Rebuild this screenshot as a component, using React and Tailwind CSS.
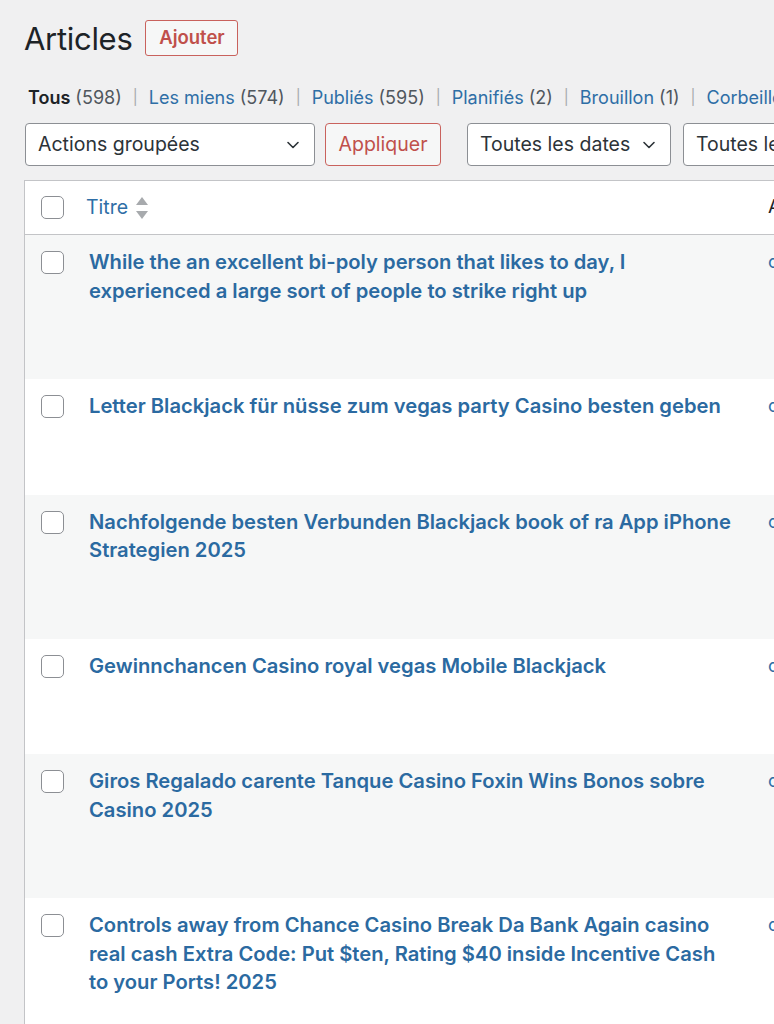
import React from 'react';

const posts = [
    { id: 1, lines: ['While the an excellent bi-poly person that likes to day, I', 'experienced a large sort of people to strike right up'] },
    { id: 2, lines: ['Letter Blackjack für nüsse zum vegas party Casino besten geben'] },
    { id: 3, lines: ['Nachfolgende besten Verbunden Blackjack book of ra App iPhone', 'Strategien 2025'] },
    { id: 4, lines: ['Gewinnchancen Casino royal vegas Mobile Blackjack'] },
    { id: 5, lines: ['Giros Regalado carente Tanque Casino Foxin Wins Bonos sobre', 'Casino 2025'] },
    { id: 6, lines: ['Controls away from Chance Casino Break Da Bank Again casino', 'real cash Extra Code: Put $ten, Rating $40 inside Incentive Cash', 'to your Ports! 2025'] },
];

const filters = [
    { label: 'Tous', count: 598, current: true },
    { label: 'Les miens', count: 574 },
    { label: 'Publiés', count: 595 },
    { label: 'Planifiés', count: 2 },
    { label: 'Brouillon', count: 1 },
    { label: 'Corbeille', count: 21 },
];

function Checkbox() {
    return <span className="block w-[23px] h-[23px] rounded-[5px] border-[1.5px] border-[#8c8f94] bg-white" />;
}

function Chevron() {
    return (
        <svg width="16" height="16" viewBox="0 0 16 16" fill="none" className="shrink-0">
            <path d="M3 5.5l5 5 5-5" stroke="#2c3338" strokeWidth="1.6" strokeLinecap="round" strokeLinejoin="round" />
        </svg>
    );
}

function Select({ label, width, chevron = true }) {
    return (
        <div className={`flex items-center justify-between h-[43px] ${width} shrink-0 rounded-[4px] border border-[#8c8f94] bg-white pl-[12px] pr-[13px] text-[19.5px] text-[#2c3338]`}>
            <span className="whitespace-nowrap">{label}</span>
            {chevron && <Chevron />}
        </div>
    );
}

export default function App() {
    return (
        <div className="min-h-screen w-[774px] overflow-hidden bg-[#f0f0f1] font-['Inter','Noto_Sans',sans-serif] text-[#3c434a]">
            <div className="pl-6 pt-5 w-[1200px]">
                {/* En-tête */}
                <div className="flex items-center gap-[13px] h-9">
                    <h1 className="text-[31px] leading-none text-[#1d2327] tracking-[-0.3px]">Articles</h1>
                    <button className="h-9 w-[93px] rounded-[3px] border border-[#c9625d] bg-[#f6f7f7] text-[18.5px] font-semibold text-[#c0504b]">
                        Ajouter
                    </button>
                </div>

                {/* Filtres de statut */}
                <ul className="flex items-center mt-[29px] ml-1 h-6 text-[18px] whitespace-nowrap">
                    {filters.map((f, i) => (
                        <li key={f.label} className="flex items-center">
                            {i > 0 && <span className="mx-[11px] text-[15px] text-[#a7aaad]">|</span>}
                            <span className={f.current ? 'font-semibold text-[#1d2327]' : 'text-[#2e6ea6]'}>{f.label}</span>
                            <span className="ml-[5px] text-[#50575e]">({f.count})</span>
                        </li>
                    ))}
                </ul>

                {/* Actions groupées */}
                <div className="flex items-center mt-[14px] ml-px">
                    <Select label="Actions groupées" width="w-[290px]" />
                    <button className="ml-[10px] h-[43px] w-[116px] shrink-0 rounded-[4px] border border-[#c9625d] bg-[#f6f7f7] text-[19.5px] text-[#c0504b]">
                        Appliquer
                    </button>
                    <div className="ml-[26px]">
                        <Select label="Toutes les dates" width="w-[204px]" />
                    </div>
                    <div className="ml-[12px]">
                        <Select label="Toutes les catégories" width="w-[260px]" />
                    </div>
                </div>

                {/* Tableau */}
                <div className="mt-[14px] border-l border-t border-[#c3c4c7] bg-white">
                    <div className="flex h-[54px] items-center border-b border-[#c3c4c7] bg-white">
                        <div className="w-[52px] shrink-0 pl-[16px]"><Checkbox /></div>
                        <div className="w-[679px] shrink-0 pl-[9px] flex items-center gap-[7px]">
                            <span className="text-[19.5px] text-[#2e6ea6]">Titre</span>
                            <svg width="14" height="24" viewBox="0 0 14 24" fill="#a7aaad">
                                <path d="M7 1l6 8H1z" />
                                <path d="M7 23l6-8H1z" />
                            </svg>
                        </div>
                        <div className="pl-[12px] text-[19px] text-[#1d2327]">Auteur</div>
                    </div>

                    {posts.map((post, i) => (
                        <div key={post.id} className={`flex ${i % 2 === 0 ? 'bg-[#f6f7f7]' : 'bg-white'}`}>
                            <div className="w-[52px] shrink-0 pl-[16px] pt-4"><Checkbox /></div>
                            <div className="w-[679px] shrink-0 pl-[12px] pt-[13px] pb-[74px]">
                                {post.lines.map(line => (
                                    <div key={line} className="whitespace-nowrap text-[20.2px] leading-[28.5px] font-semibold text-[#2b6aa1]">
                                        {line}
                                    </div>
                                ))}
                            </div>
                            <div className="pl-[12px] pt-[13px] text-[18px] leading-[28.5px] text-[#2e6ea6]">contributeur</div>
                        </div>
                    ))}
                </div>
            </div>
        </div>
    );
}
